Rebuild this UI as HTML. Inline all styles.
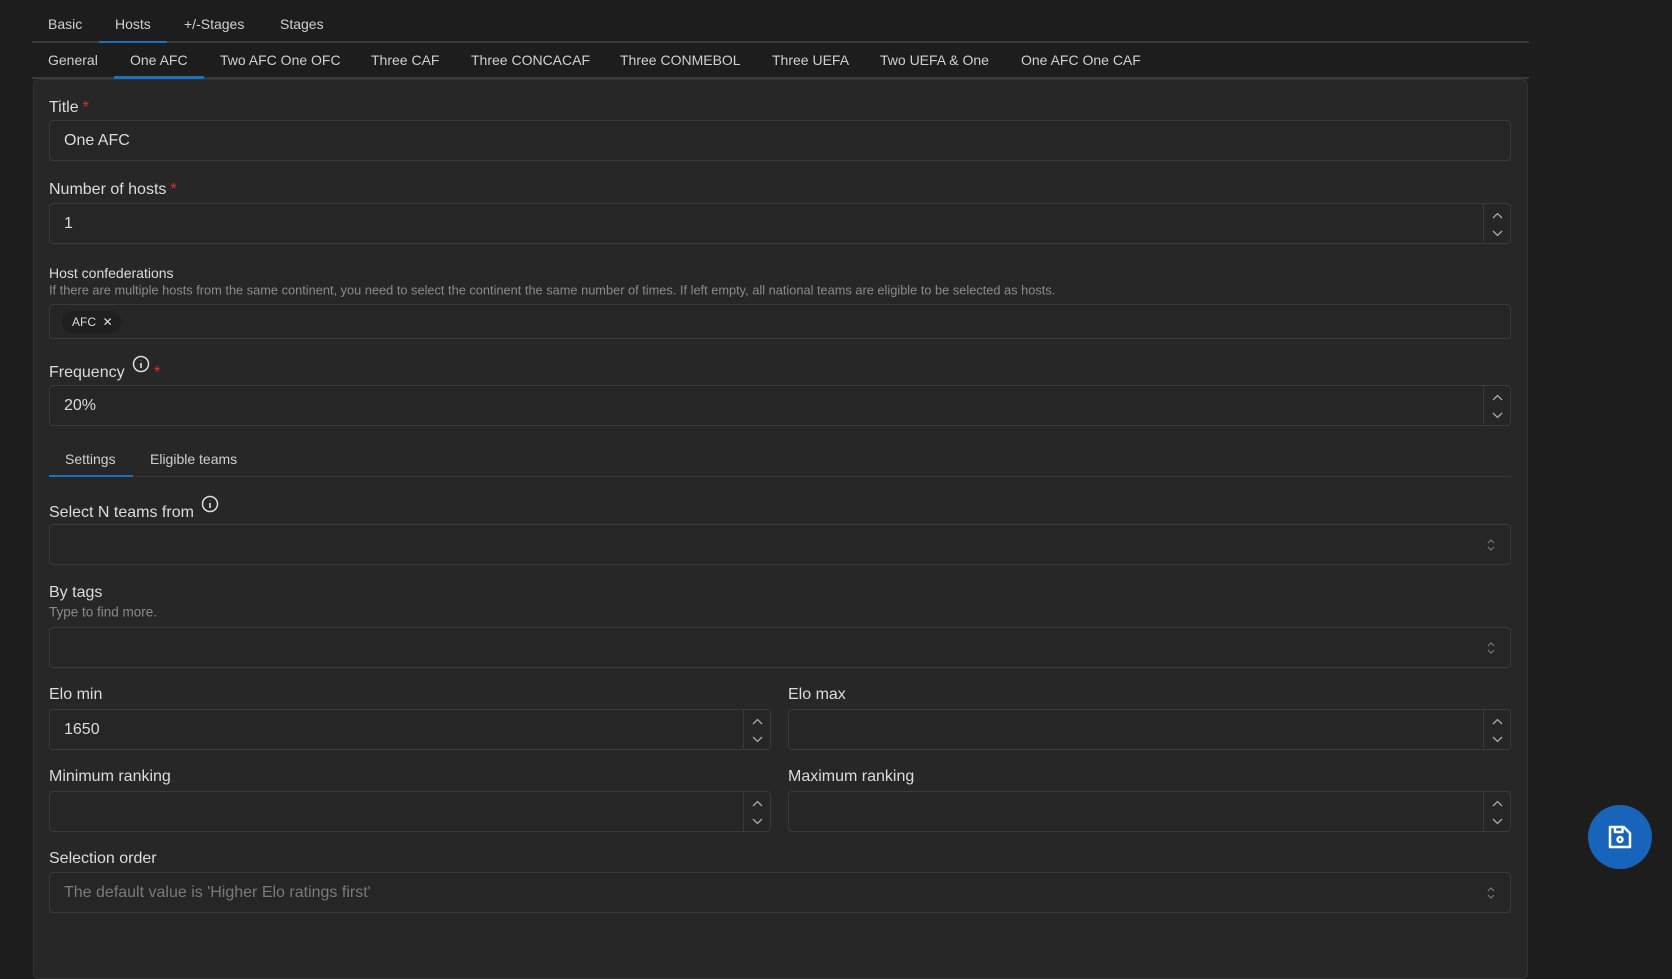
<!DOCTYPE html>
<html><head><meta charset="utf-8"><style>
*{box-sizing:border-box;margin:0;padding:0}
body{width:1672px;height:930px;background:#1d1d1d;font-family:"Liberation Sans",sans-serif;color:#dcdcdc;position:relative;overflow:hidden}
.abs{position:absolute}
.tab{position:absolute;font-size:14px;color:#d0d0d0;transform:translateY(-50%)}
.line{position:absolute;height:2px;background:#3a3a3a}
.ul{position:absolute;height:2px;background:#1971c2}
.panel{position:absolute;left:33px;top:79px;width:1495px;height:900px;background:#272727;border:1px solid #333;border-radius:6px}
.lbl{position:absolute;left:49px;font-size:16px;color:#dcdcdc;transform:translateY(-50%)}
.lbl .req{color:#e03131;margin-left:4px}
.help{position:absolute;left:49px;font-size:12.8px;color:#8a8a8a;transform:translateY(-50%)}
.inp{position:absolute;background:#262626;border:1px solid #3a3a3a;border-radius:4px;font-size:16px;color:#dcdcdc;padding-left:14px;display:flex;align-items:center}
.inp .ph{color:#7a7a7a}
.spin{position:absolute;right:0;top:0;bottom:0;width:27px;border-left:1px solid #3a3a3a}
.spin svg{position:absolute;left:8px}
.sel{position:absolute;right:14px;top:50%;transform:translateY(-50%)}
</style></head><body>
<div class="tab" style="left:48px;top:24px">Basic</div>
<div class="tab" style="left:115px;top:24px">Hosts</div>
<div class="tab" style="left:184px;top:24px">+/-Stages</div>
<div class="tab" style="left:280px;top:24px">Stages</div>
<div class="line" style="left:32px;top:41px;width:1497px"></div>
<div class="ul" style="left:99px;top:41px;width:68px"></div>

<div class="tab" style="left:48px;top:60px">General</div>
<div class="tab" style="left:130px;top:60px">One AFC</div>
<div class="tab" style="left:220px;top:60px">Two AFC One OFC</div>
<div class="tab" style="left:371px;top:60px">Three CAF</div>
<div class="tab" style="left:471px;top:60px">Three CONCACAF</div>
<div class="tab" style="left:620px;top:60px">Three CONMEBOL</div>
<div class="tab" style="left:772px;top:60px">Three UEFA</div>
<div class="tab" style="left:880px;top:60px">Two UEFA &amp; One</div>
<div class="tab" style="left:1021px;top:60px">One AFC One CAF</div>
<div class="line" style="left:32px;top:77px;width:1497px"></div>
<div class="ul" style="left:114px;top:76px;width:90px;height:3px"></div>

<div class="panel"></div>

<div class="lbl" style="top:108px">Title<span class="req">*</span></div>
<div class="inp" style="left:49px;top:120px;width:1462px;height:41px">One AFC</div>

<div class="lbl" style="top:190px">Number of hosts<span class="req">*</span></div>
<div class="inp" style="left:49px;top:203px;width:1462px;height:41px">1<div class="spin"><svg width="11" height="7" style="top:8px"><path d="M1 6L5.5 1.5L10 6" stroke="#aaa" fill="none" stroke-width="1.3"/></svg><svg width="11" height="7" style="top:26px"><path d="M1 1L5.5 5.5L10 1" stroke="#aaa" fill="none" stroke-width="1.3"/></svg></div></div>

<div class="lbl" style="top:273px;font-size:14px">Host confederations</div>
<div class="help" style="top:290px">If there are multiple hosts from the same continent, you need to select the continent the same number of times. If left empty, all national teams are eligible to be selected as hosts.</div>
<div class="inp" style="left:49px;top:304px;width:1462px;height:35px;padding-left:12px"><span style="background:#1f1f1f;border-radius:12px;font-size:12px;padding:4px 8px 4px 10px">AFC&nbsp; ✕</span></div>

<div class="lbl" style="top:371px">Frequency <svg width="18" height="18" style="vertical-align:-1px;margin-left:3px;position:relative;top:-5px"><circle cx="9" cy="9" r="7.5" stroke="#ddd" fill="none" stroke-width="1.5"/><path d="M9 8v5M9 5.2v.3" stroke="#ddd" stroke-width="1.6"/></svg><span class="req">*</span></div>
<div class="inp" style="left:49px;top:385px;width:1462px;height:41px">20%<div class="spin"><svg width="11" height="7" style="top:8px"><path d="M1 6L5.5 1.5L10 6" stroke="#aaa" fill="none" stroke-width="1.3"/></svg><svg width="11" height="7" style="top:26px"><path d="M1 1L5.5 5.5L10 1" stroke="#aaa" fill="none" stroke-width="1.3"/></svg></div></div>

<div class="tab" style="left:65px;top:459px">Settings</div>
<div class="tab" style="left:150px;top:459px">Eligible teams</div>
<div class="line" style="left:49px;top:476px;width:1462px;height:1px"></div>
<div class="ul" style="left:49px;top:475px;width:84px"></div>

<div class="lbl" style="top:511px">Select N teams from <svg width="18" height="18" style="margin-left:3px;position:relative;top:-5px;vertical-align:-1px"><circle cx="9" cy="9" r="7.5" stroke="#ddd" fill="none" stroke-width="1.5"/><path d="M9 8v5M9 5.2v.3" stroke="#ddd" stroke-width="1.6"/></svg></div>
<div class="inp" style="left:49px;top:524px;width:1462px;height:41px"><svg class="sel" width="10" height="14"><path d="M2 5L5 2L8 5M2 9L5 12L8 9" stroke="#777" fill="none" stroke-width="1.2"/></svg></div>

<div class="lbl" style="top:593px">By tags</div>
<div class="help" style="top:612px;font-size:13.5px">Type to find more.</div>
<div class="inp" style="left:49px;top:627px;width:1462px;height:41px"><svg class="sel" width="10" height="14"><path d="M2 5L5 2L8 5M2 9L5 12L8 9" stroke="#777" fill="none" stroke-width="1.2"/></svg></div>

<div class="lbl" style="top:695px">Elo min</div>
<div class="lbl" style="top:695px;left:788px">Elo max</div>
<div class="inp" style="left:49px;top:709px;width:722px;height:41px">1650<div class="spin"><svg width="11" height="7" style="top:8px"><path d="M1 6L5.5 1.5L10 6" stroke="#aaa" fill="none" stroke-width="1.3"/></svg><svg width="11" height="7" style="top:26px"><path d="M1 1L5.5 5.5L10 1" stroke="#aaa" fill="none" stroke-width="1.3"/></svg></div></div>
<div class="inp" style="left:788px;top:709px;width:723px;height:41px"><div class="spin"><svg width="11" height="7" style="top:8px"><path d="M1 6L5.5 1.5L10 6" stroke="#aaa" fill="none" stroke-width="1.3"/></svg><svg width="11" height="7" style="top:26px"><path d="M1 1L5.5 5.5L10 1" stroke="#aaa" fill="none" stroke-width="1.3"/></svg></div></div>

<div class="lbl" style="top:777px">Minimum ranking</div>
<div class="lbl" style="top:777px;left:788px">Maximum ranking</div>
<div class="inp" style="left:49px;top:791px;width:722px;height:41px"><div class="spin"><svg width="11" height="7" style="top:8px"><path d="M1 6L5.5 1.5L10 6" stroke="#aaa" fill="none" stroke-width="1.3"/></svg><svg width="11" height="7" style="top:26px"><path d="M1 1L5.5 5.5L10 1" stroke="#aaa" fill="none" stroke-width="1.3"/></svg></div></div>
<div class="inp" style="left:788px;top:791px;width:723px;height:41px"><div class="spin"><svg width="11" height="7" style="top:8px"><path d="M1 6L5.5 1.5L10 6" stroke="#aaa" fill="none" stroke-width="1.3"/></svg><svg width="11" height="7" style="top:26px"><path d="M1 1L5.5 5.5L10 1" stroke="#aaa" fill="none" stroke-width="1.3"/></svg></div></div>

<div class="lbl" style="top:859px">Selection order</div>
<div class="inp" style="left:49px;top:872px;width:1462px;height:41px"><span class="ph">The default value is 'Higher Elo ratings first'</span><svg class="sel" width="10" height="14"><path d="M2 5L5 2L8 5M2 9L5 12L8 9" stroke="#777" fill="none" stroke-width="1.2"/></svg></div>

<div class="abs" style="left:1588px;top:805px;width:64px;height:64px;border-radius:50%;background:#1864bb">
<svg width="30" height="30" viewBox="0 0 24 24" style="position:absolute;left:17px;top:17px"><path d="M4 4h11l5 5v11H4z M8 4v4h6V4" stroke="#fff" fill="none" stroke-width="2" stroke-linejoin="round"/><circle cx="12" cy="14" r="2" stroke="#fff" fill="none" stroke-width="2"/></svg>
</div>
</body></html>
